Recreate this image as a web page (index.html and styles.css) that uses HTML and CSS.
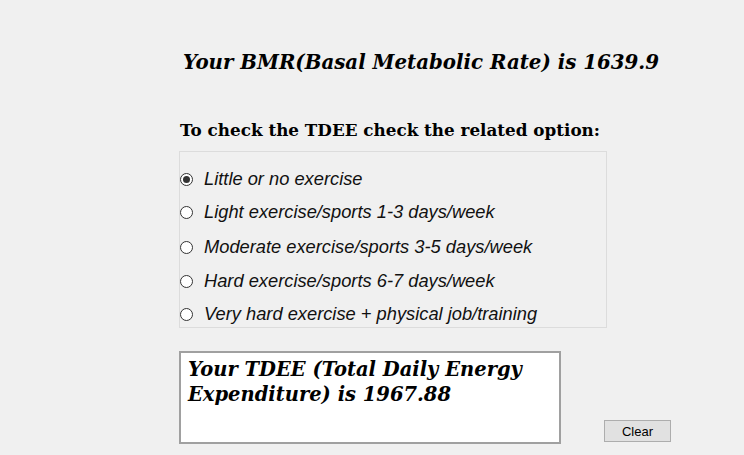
FILE: index.html
```html
<!DOCTYPE html>
<html>
<head>
<meta charset="utf-8">
<link rel="stylesheet" href="styles.css">
</head>
<body>
<div class="form">
  <h1 class="bmr">Your BMR(Basal Metabolic Rate) is 1639.9</h1>
  <h2 class="prompt">To check the TDEE check the related option:</h2>
  <div class="group">
    <label class="opt r1"><span class="radio checked"></span><span class="txt">Little or no exercise</span></label>
    <label class="opt r2"><span class="radio"></span><span class="txt">Light exercise/sports 1-3 days/week</span></label>
    <label class="opt r3"><span class="radio"></span><span class="txt">Moderate exercise/sports 3-5 days/week</span></label>
    <label class="opt r4"><span class="radio"></span><span class="txt">Hard exercise/sports 6-7 days/week</span></label>
    <label class="opt r5"><span class="radio"></span><span class="txt">Very hard exercise + physical job/training</span></label>
  </div>
  <div class="bottom">
    <div class="result">Your TDEE (Total Daily Energy Expenditure) is 1967.88</div>
    <button class="clear">Clear</button>
  </div>
</div>
</body>
</html>
```
FILE: styles.css
```css
html, body {
  margin: 0;
  padding: 0;
  background: #f0f0f0;
  width: 744px;
  height: 455px;
  overflow: hidden;
}
.form {
  display: flex;
  flex-direction: column;
  padding-left: 179px;
  padding-top: 50px;
}
.bmr {
  margin: 0 0 0 4px;
  font-family: "DejaVu Serif", serif;
  font-weight: bold;
  font-style: italic;
  font-size: 19.8px;
  line-height: 24px;
  color: #000;
  white-space: nowrap;
}
.prompt {
  margin: 46px 0 0 1px;
  font-family: "DejaVu Serif", serif;
  font-weight: bold;
  font-size: 16.8px;
  line-height: 20px;
  color: #000;
  white-space: nowrap;
}
.group {
  margin-top: 11px;
  width: 426px;
  height: 158px;
  border: 1px solid #dcdcdc;
  display: flex;
  flex-direction: column;
  padding-top: 17px;
  box-sizing: content-box;
}
.opt {
  display: flex;
  align-items: center;
  height: 20px;
}
.r2 { margin-top: 13px; }
.r3 { margin-top: 15px; }
.r4 { margin-top: 14px; }
.r5 { margin-top: 13px; }
.radio {
  width: 11px;
  height: 11px;
  border: 1px solid #333;
  border-radius: 50%;
  background: #fff;
  display: flex;
  align-items: center;
  justify-content: center;
  flex: none;
}
.radio.checked::after {
  content: "";
  width: 7px;
  height: 7px;
  border-radius: 50%;
  background: #333;
}
.txt {
  margin-left: 11px;
  font-family: "Liberation Sans", Arial, sans-serif;
  font-style: italic;
  font-size: 18.3px;
  color: #111;
  white-space: nowrap;
}
.bottom {
  display: flex;
  align-items: flex-end;
  margin-top: 23px;
}
.result {
  width: 371px;
  height: 85px;
  background: #fff;
  border: 2px solid #a0a0a0;
  padding: 4px 0 0 7px;
  font-family: "DejaVu Serif", serif;
  font-weight: bold;
  font-style: italic;
  font-size: 19.5px;
  line-height: 25px;
  color: #000;
  box-sizing: content-box;
}
.clear {
  margin: 0 0 2px 43px;
  width: 67px;
  height: 22px;
  background: #e1e1e1;
  border: 1px solid #adadad;
  font-family: "Liberation Sans", Arial, sans-serif;
  font-size: 13px;
  color: #000;
  padding: 0;
}
```
